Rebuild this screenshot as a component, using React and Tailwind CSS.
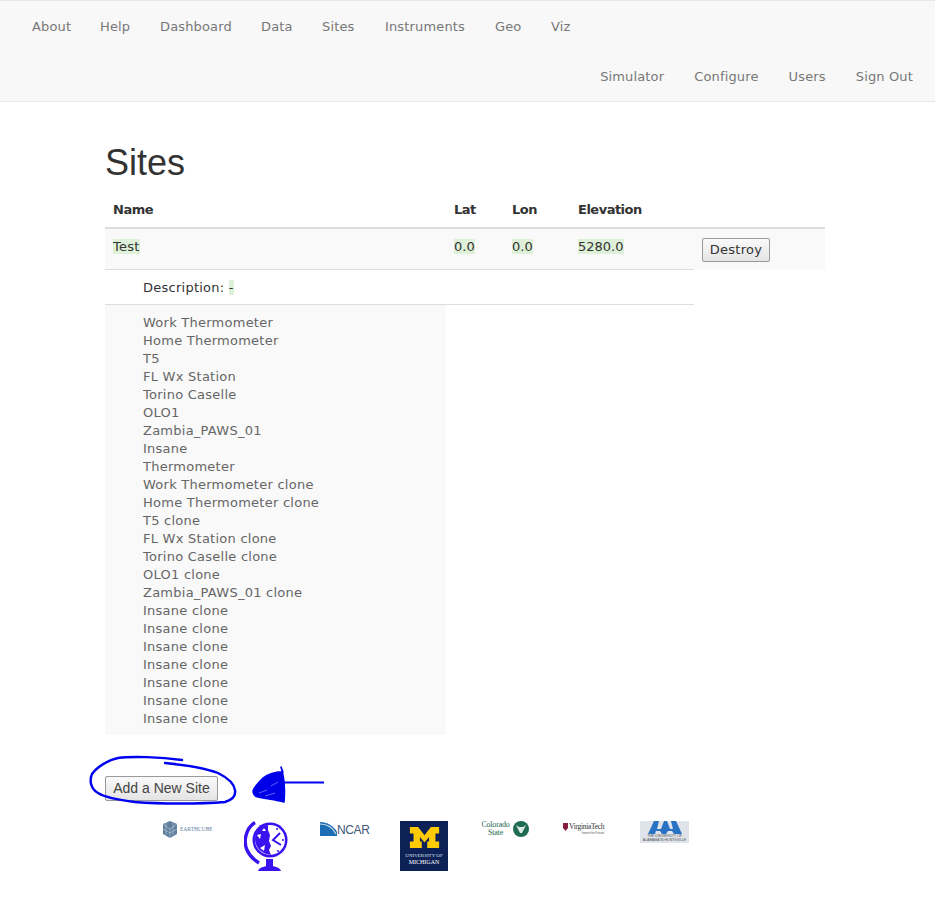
import React from 'react'

const leftNav = [
  { label: 'About', className: 'w-[68px]' },
  { label: 'Help', className: 'w-[60px]' },
  { label: 'Dashboard', className: 'w-[101px]' },
  { label: 'Data', className: 'w-[61px]' },
  { label: 'Sites', className: 'w-[63px]' },
  { label: 'Instruments', className: 'w-[110px]' },
  { label: 'Geo', className: 'w-[56px]' },
  { label: 'Viz', className: 'w-[40px]' },
]

const rightNav = [
  { label: 'Simulator', className: 'ml-0' },
  { label: 'Configure', className: 'ml-[30px]' },
  { label: 'Users', className: 'ml-[30px]' },
  { label: 'Sign Out', className: 'ml-[30px]' },
]

const instruments = [
  'Work Thermometer', 'Home Thermometer', 'T5', 'FL Wx Station', 'Torino Caselle', 'OLO1', 'Zambia_PAWS_01',
  'Insane', 'Thermometer', 'Work Thermometer clone', 'Home Thermometer clone', 'T5 clone', 'FL Wx Station clone',
  'Torino Caselle clone', 'OLO1 clone', 'Zambia_PAWS_01 clone', 'Insane clone', 'Insane clone', 'Insane clone',
  'Insane clone', 'Insane clone', 'Insane clone', 'Insane clone',
]

function Cell({ children }) {
  return <span className="bg-[#dff0d8]">{children}</span>
}

function EarthCube() {
  return (
    <div className="flex items-center gap-[2px] pl-[2px] h-[17px]">
      <svg width="16" height="17" viewBox="0 0 16 17" className="shrink-0">
        <path d="M8 0L15 3V13L8 17L1 13V3Z" fill="#5f7d9c" />
        <path d="M8 8V17M1 3L8 8L15 3M4 2V14M11 2V14M1 8L8 12L15 8" stroke="#b7c6d6" strokeWidth="0.7" fill="none" />
      </svg>
      <span className="font-['Liberation_Serif',serif] text-[5.5px] text-[#5f7d9c] whitespace-nowrap">EARTHCUBE</span>
    </div>
  )
}

function Globe() {
  return (
    <svg width="44" height="51" viewBox="0 0 44 51" className="ml-[4px]">
      <path d="M11 1.5C2 7-1 20 3 29C6 36 10 39 15 42" stroke="#3a12f0" strokeWidth="3.4" fill="none" />
      <circle cx="26" cy="19" r="17.5" fill="#3a12f0" />
      <circle cx="26" cy="19" r="15" fill="#fff" />
      <path d="M24 4C17 4 11 10 11 18C11 26 17 33 27 34L25 29L27 25L25 20L26 14L24 9Z" fill="#3a12f0" />
      <path d="M13 14L17 13L16 18Z M20 30L16 27L21 24Z M20 7L22 10L18 10Z" fill="#fff" />
      <path d="M36 12L29 19L37 24" stroke="#3a12f0" strokeWidth="2" fill="none" />
      <circle cx="33" cy="8" r="1" fill="#3a12f0" />
      <circle cx="39" cy="19" r="1" fill="#3a12f0" />
      <circle cx="34" cy="30" r="1" fill="#3a12f0" />
      <path d="M22 38H29V46H22Z" fill="#3a12f0" />
      <path d="M14 50C15 46.5 20 45 25.5 45C31 45 36 46.5 37 50Z" fill="#3a12f0" />
    </svg>
  )
}

function Ncar() {
  return (
    <div className="flex items-end h-[15px] w-[50px]">
      <svg width="17" height="14" viewBox="0 0 17 14" className="shrink-0">
        <path d="M0 0C7 0 14 4 17 10V14H0Z" fill="#1d6fb5" />
        <path d="M0 2C7 2 13 6 16 12" stroke="#d5dfe8" strokeWidth="1.2" fill="none" />
      </svg>
      <span className="font-['Liberation_Sans',sans-serif] text-[12px] leading-[12px] text-[#3d5878] tracking-[-0.4px]">NCAR</span>
    </div>
  )
}

function Michigan() {
  return (
    <div className="w-[48px] h-[50px] bg-[#0d2157] flex flex-col items-center pt-[6px]">
      <svg width="33" height="21" viewBox="0 0 32 23">
        <path d="M0 0H9L16 9L23 0H32V7H28V16H32V23H19V16H21V11L16 17L11 11V16H13V23H0V16H4V7H0Z" fill="#ffcb05" />
      </svg>
      <span className="mt-[5px] font-['Liberation_Serif',serif] text-[5px] leading-[6px] text-[#dfe3ee] whitespace-nowrap">UNIVERSITY OF</span>
      <span className="font-['Liberation_Serif',serif] text-[6px] leading-[7px] text-white whitespace-nowrap">MICHIGAN</span>
    </div>
  )
}

function ColoradoState() {
  return (
    <div className="flex items-start h-[17px] w-[50px]">
      <div className="flex flex-col items-center font-['Liberation_Serif',serif] text-[8px] leading-[8px] text-[#1e6b52] tracking-[-0.2px] w-[31px]">
        <span>Colorado</span>
        <span>State</span>
      </div>
      <svg width="16" height="16" viewBox="0 0 16 16" className="ml-[2px] shrink-0">
        <circle cx="8" cy="8" r="8" fill="#1e6b52" />
        <path d="M3 4L6 6H10L13 4L11 8L9 12H7L5 8Z" fill="#dcebe3" />
      </svg>
    </div>
  )
}

function VirginiaTech() {
  return (
    <div className="flex items-start h-[12px] w-[50px] pl-[3px] pt-[2px]">
      <svg width="5" height="8" viewBox="0 0 5 8" className="shrink-0">
        <path d="M0 0H5V5L2.5 8L0 5Z" fill="#861f41" />
      </svg>
      <div className="flex flex-col items-end ml-[1px]">
        <span className="font-['Liberation_Serif',serif] text-[7.5px] leading-[8px] text-[#333] tracking-[-0.3px] whitespace-nowrap">VirginiaTech</span>
        <span className="font-['Liberation_Sans',sans-serif] text-[3px] leading-[4px] text-[#555] whitespace-nowrap">Invent the Future</span>
      </div>
    </div>
  )
}

function Uah() {
  return (
    <div className="w-[49px] h-[22px] bg-[#dfe3ea] flex flex-col items-center">
      <svg width="34" height="13" viewBox="0 0 34 13" className="shrink-0">
        <path d="M0 13L6 0H11L9 8H13L16 0H19L22 8H25L23 0H28L34 13H26L24 10H20L18 13H14L12 10H8L7 13Z" fill="#2a72c4" />
      </svg>
      <span className="font-['Liberation_Sans',sans-serif] text-[3.5px] leading-[4px] text-[#555] whitespace-nowrap">THE UNIVERSITY OF</span>
      <span className="font-['Liberation_Sans',sans-serif] text-[3.5px] leading-[4px] text-[#555] whitespace-nowrap">ALABAMA IN HUNTSVILLE</span>
    </div>
  )
}

const logos = [EarthCube, Globe, Ncar, Michigan, ColoradoState, VirginiaTech, Uah]

export default function App() {
  return (
    <div className="relative min-h-[916px] bg-white font-['DejaVu_Sans',sans-serif] text-[13px] text-[#333]">
      {/* Navbar */}
      <nav className="h-[102px] bg-[#f8f8f8] border-y border-[#e7e7e7] tracking-[0.15px]">
        <div className="flex h-[50px] pt-[2px] pl-[32px] items-center text-[#777]">
          {leftNav.map((item) => (
            <a key={item.label} className={item.className}>{item.label}</a>
          ))}
        </div>
        <div className="flex h-[50px] pt-[2px] justify-end pr-[22px] items-center text-[#777]">
          {rightNav.map((item) => (
            <a key={item.label} className={item.className}>{item.label}</a>
          ))}
        </div>
      </nav>

      <div className="ml-[105px] w-[720px] tracking-[0.25px]">
        <h1 className="mt-[41px] h-[46px] font-['Liberation_Sans',sans-serif] text-[36px] leading-[40px] font-medium tracking-normal">Sites</h1>

        {/* Table header */}
        <div className="grid grid-cols-[341px_58px_66px_124px_131px] h-[40px] pt-[3px] border-b-2 border-[#ddd] font-bold items-center tracking-[-0.5px]">
          <div className="pl-[8px]">Name</div>
          <div className="pl-[8px]">Lat</div>
          <div className="pl-[8px]">Lon</div>
          <div className="pl-[8px]">Elevation</div>
        </div>

        {/* Site row */}
        <div className="grid grid-cols-[341px_58px_66px_124px_131px] h-[40px] bg-[#f9f9f9] leading-[18px]">
          <div className="pl-[8px] pt-[9px]"><Cell>Test</Cell></div>
          <div className="pl-[8px] pt-[9px] tracking-normal"><Cell>0.0</Cell></div>
          <div className="pl-[8px] pt-[9px] tracking-normal"><Cell>0.0</Cell></div>
          <div className="pl-[8px] pt-[9px] tracking-normal"><Cell>5280.0</Cell></div>
          <div className="pl-[8px] pt-[9px]">
            <button className="h-[24px] w-[68px] rounded-[2px] border border-[#999] bg-gradient-to-b from-[#fafafa] to-[#e4e4e4] text-[#333]">Destroy</button>
          </div>
        </div>

        <div className="w-[589px] h-[36px] border-y border-[#ddd] pl-[38px] pt-[9px] leading-[18px]">
          Description: <Cell>-</Cell>
        </div>

        <div className="w-[341px] bg-[#f9f9f9] pl-[38px] pt-[9px] pb-[7px] text-[#666] leading-[18px]">
          {instruments.map((name, i) => (
            <div key={i}>{name}</div>
          ))}
        </div>

        <button className="mt-[41px] h-[25px] w-[113px] rounded-[2px] border border-[#999] bg-gradient-to-b from-[#fafafa] to-[#e4e4e4] font-['Liberation_Sans',sans-serif] text-[14px] text-[#444] tracking-normal">Add a New Site</button>

        {/* Partner logos */}
        <div className="flex mt-[20px] ml-[55px] tracking-normal">
          {logos.map((Logo, i) => (
            <div key={i} className="w-[80px] shrink-0"><Logo /></div>
          ))}
        </div>
      </div>

      {/* Hand drawn annotation over the page */}
      <svg className="absolute left-0 top-0 pointer-events-none" width="935" height="916">
        <path d="M182 760C160 757 132 756 118 758C108 760 97 767 92 774C89 781 91 789 98 793C106 798 118 800 135 802C160 804 200 804 225 802C232 800 236 796 235 790C234 783 226 777 218 773C205 768 185 765 165 763" fill="none" stroke="#0000f0" strokeWidth="2.4" strokeLinecap="round" />
        <path d="M281 767L283 772L278 772C272 773 267 775 263 778C258 783 254 787 253 791C253 794 255 797 258 797C268 799 277 800 284 802C285 792 285 780 281 767Z" fill="#0000e8" stroke="#0000f0" strokeWidth="1.5" strokeLinejoin="round" />
        <path d="M259 793L267 790M265 796L275 793M271 786L278 782" stroke="#8a8af5" strokeWidth="0.7" fill="none" />
        <path d="M282 782.5H324" fill="none" stroke="#0000f0" strokeWidth="2" />
      </svg>
    </div>
  )
}
